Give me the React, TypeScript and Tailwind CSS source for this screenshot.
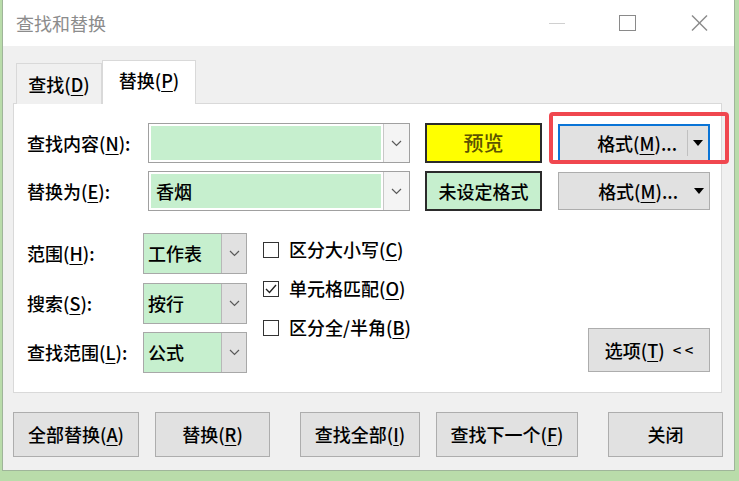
import React from "react";

const FONT = { fontFamily: '"Noto Sans CJK SC", "Microsoft YaHei", sans-serif' };

function U({ children }: { children: React.ReactNode }) {
  return <span className="underline underline-offset-[3px] decoration-[1px]">{children}</span>;
}

function Chevron() {
  return (
    <svg width="11" height="7" viewBox="0 0 11 7">
      <polyline points="1,1 5.5,5.5 10,1" fill="none" stroke="#5a5a5a" strokeWidth="1.2" />
    </svg>
  );
}

function Tri() {
  return (
    <svg width="10" height="6" viewBox="0 0 10 6">
      <polygon points="0,0 10,0 5,6" fill="#000" />
    </svg>
  );
}

function Combo({ text }: { text?: string }) {
  return (
    <div className="flex h-[40px] w-[262px] border border-[#a0a0a0] bg-white">
      <div className="flex-1 bg-[#c6efce] border-[2px] border-white flex items-center pl-[5px] text-[18px] text-black">
        {text}
      </div>
      <div className="w-[26px] flex items-center justify-center border-l border-[#c8c8c8] bg-[#f4f4f4]">
        <Chevron />
      </div>
    </div>
  );
}

function Select({ text }: { text: string }) {
  return (
    <div className="flex h-[41px] w-[104px] border border-[#a8a8a8] bg-[#c6efce]">
      <div className="flex-1 flex items-center pl-[4px] text-[18px] text-black">{text}</div>
      <div className="w-[25px] flex items-center justify-center border-l border-[#b8b8b8] bg-[#e1e1e1]">
        <Chevron />
      </div>
    </div>
  );
}

function Check({ checked, children }: { checked?: boolean; children: React.ReactNode }) {
  return (
    <div className="h-[39px] flex items-center">
      <div className="w-[16px] h-[16px] border border-[#333] bg-white flex items-center justify-center mr-[10px]">
        {checked && (
          <svg width="12" height="10" viewBox="0 0 12 10">
            <polyline points="1,5 4.5,8.5 11,1" fill="none" stroke="#222" strokeWidth="1.4" />
          </svg>
        )}
      </div>
      <span className="text-[18px] text-black">{children}</span>
    </div>
  );
}

function Btn({ w, children, ml }: { w: string; children: React.ReactNode; ml?: string }) {
  return (
    <div
      className={`${w} ${ml ?? ""} h-[45px] border border-[#adadad] bg-[#e1e1e1] flex items-center justify-center text-[18px] text-black`}
    >
      {children}
    </div>
  );
}

export default function App() {
  return (
    <div className="relative w-[739px] h-[481px] bg-[#b9dcaa] overflow-hidden font-medium" style={FONT}>
      <div className="ml-[2px] w-[733px] h-[471px] border-x border-b border-[#9fb59a] bg-[#f0f0f0] flex flex-col">
        {/* title bar */}
        <div className="h-[46px] bg-white flex items-center shrink-0">
          <span className="ml-[13px] text-[18px] text-[#8c8c8c] font-normal">查找和替换</span>
          <div className="ml-auto flex items-center">
            <div className="w-[16px] h-px bg-[#d0d0d0] mr-[54px]" />
            <div className="w-[17px] h-[16px] border-[1.5px] border-[#8a8a8a] mr-[55px]" />
            <svg width="17" height="16" viewBox="0 0 17 16" className="mr-[26px]">
              <line x1="1" y1="0.5" x2="16" y2="15.5" stroke="#8a8a8a" strokeWidth="1.4" />
              <line x1="16" y1="0.5" x2="1" y2="15.5" stroke="#8a8a8a" strokeWidth="1.4" />
            </svg>
          </div>
        </div>

        {/* tabs */}
        <div className="ml-[10px] mt-[14px] flex items-end pl-[3px] relative z-10 h-[44px] -mb-px">
          <div className="w-[86px] h-[41px] border border-b-0 border-[#d9d9d9] bg-[#f0f0f0] flex items-center justify-center text-[18px] text-black">
            查找(<U>D</U>)
          </div>
          <div className="w-[94px] h-[44px] border border-b-0 border-[#d9d9d9] bg-white flex items-center justify-center pb-[4px] text-[18px] text-black">
            替换(<U>P</U>)
          </div>
        </div>

        {/* panel */}
        <div className="ml-[10px] w-[709px] h-[290px] border border-[#d9d9d9] bg-white pl-[13px] pr-[11px] pt-[19px] flex flex-col">
          <div className="flex items-center">
            <div className="w-[121px] text-[18px] text-black">
              查找内容(<U>N</U>):
            </div>
            <Combo />
            <div className="ml-[15px] w-[117px] h-[40px] border-[2px] border-[#2b2b2b] bg-[#ffff00] flex items-center justify-center text-[20px] text-[#5c5400]">
              预览
            </div>
            <div className="ml-[16px] w-[152px] h-[38px] border-[2px] border-[#0a74d6] bg-[#e1e1e1] flex items-center text-[18px] text-black">
              <div className="flex-1 flex justify-end pr-[10px]">
                格式(<U>M</U>)...
              </div>
              <div className="w-px h-[26px] bg-[#c0c0c0]" />
              <div className="w-[20px] flex justify-center">
                <Tri />
              </div>
            </div>
          </div>
          <div className="flex items-center mt-[8px]">
            <div className="w-[121px] text-[18px] text-black">
              替换为(<U>E</U>):
            </div>
            <Combo text="香烟" />
            <div className="ml-[15px] w-[117px] h-[40px] border-[2px] border-[#2b2b2b] bg-[#c6efce] flex items-center justify-center text-[18px] text-black">
              未设定格式
            </div>
            <div className="ml-[16px] w-[152px] h-[38px] border border-[#adadad] bg-[#e1e1e1] flex items-center text-[18px] text-black">
              <div className="flex-1 flex justify-end pr-[11px]">
                格式(<U>M</U>)...
              </div>
              <div className="w-[20px] flex justify-center">
                <Tri />
              </div>
            </div>
          </div>

          <div className="flex mt-[22px]">
            <div className="flex flex-col">
              <div className="flex items-center">
                <div className="w-[116px] text-[18px] text-black">
                  范围(<U>H</U>):
                </div>
                <Select text="工作表" />
              </div>
              <div className="flex items-center mt-[9px]">
                <div className="w-[116px] text-[18px] text-black">
                  搜索(<U>S</U>):
                </div>
                <Select text="按行" />
              </div>
              <div className="flex items-center mt-[8px]">
                <div className="w-[116px] text-[18px] text-black">
                  查找范围(<U>L</U>):
                </div>
                <Select text="公式" />
              </div>
            </div>
            <div className="ml-[16px] -mt-[3px] flex flex-col">
              <Check>
                区分大小写(<U>C</U>)
              </Check>
              <Check checked>
                单元格匹配(<U>O</U>)
              </Check>
              <Check>
                区分全/半角(<U>B</U>)
              </Check>
            </div>
            <div className="ml-auto self-end mb-[1px] w-[122px] h-[44px] border border-[#adadad] bg-[#e1e1e1] flex items-center justify-center text-[18px] text-black">
              选项(<U>T</U>)&nbsp;&nbsp;<span className="text-[15px]">&lt;&nbsp;&lt;</span>
            </div>
          </div>
        </div>

        {/* bottom buttons */}
        <div className="ml-[10px] mt-[19px] flex">
          <Btn w="w-[126px]">
            全部替换(<U>A</U>)
          </Btn>
          <Btn w="w-[115px]" ml="ml-[16px]">
            替换(<U>R</U>)
          </Btn>
          <Btn w="w-[120px]" ml="ml-[30px]">
            查找全部(<U>I</U>)
          </Btn>
          <Btn w="w-[142px]" ml="ml-[16px]">
            查找下一个(<U>F</U>)
          </Btn>
          <Btn w="w-[115px]" ml="ml-[30px]">
            关闭
          </Btn>
        </div>
      </div>

      {/* red highlight */}
      <div className="absolute left-[549px] top-[112px] w-[180px] h-[52px] border-[4px] border-[#f0474f] rounded-[4px] pointer-events-none" />
    </div>
  );
}
